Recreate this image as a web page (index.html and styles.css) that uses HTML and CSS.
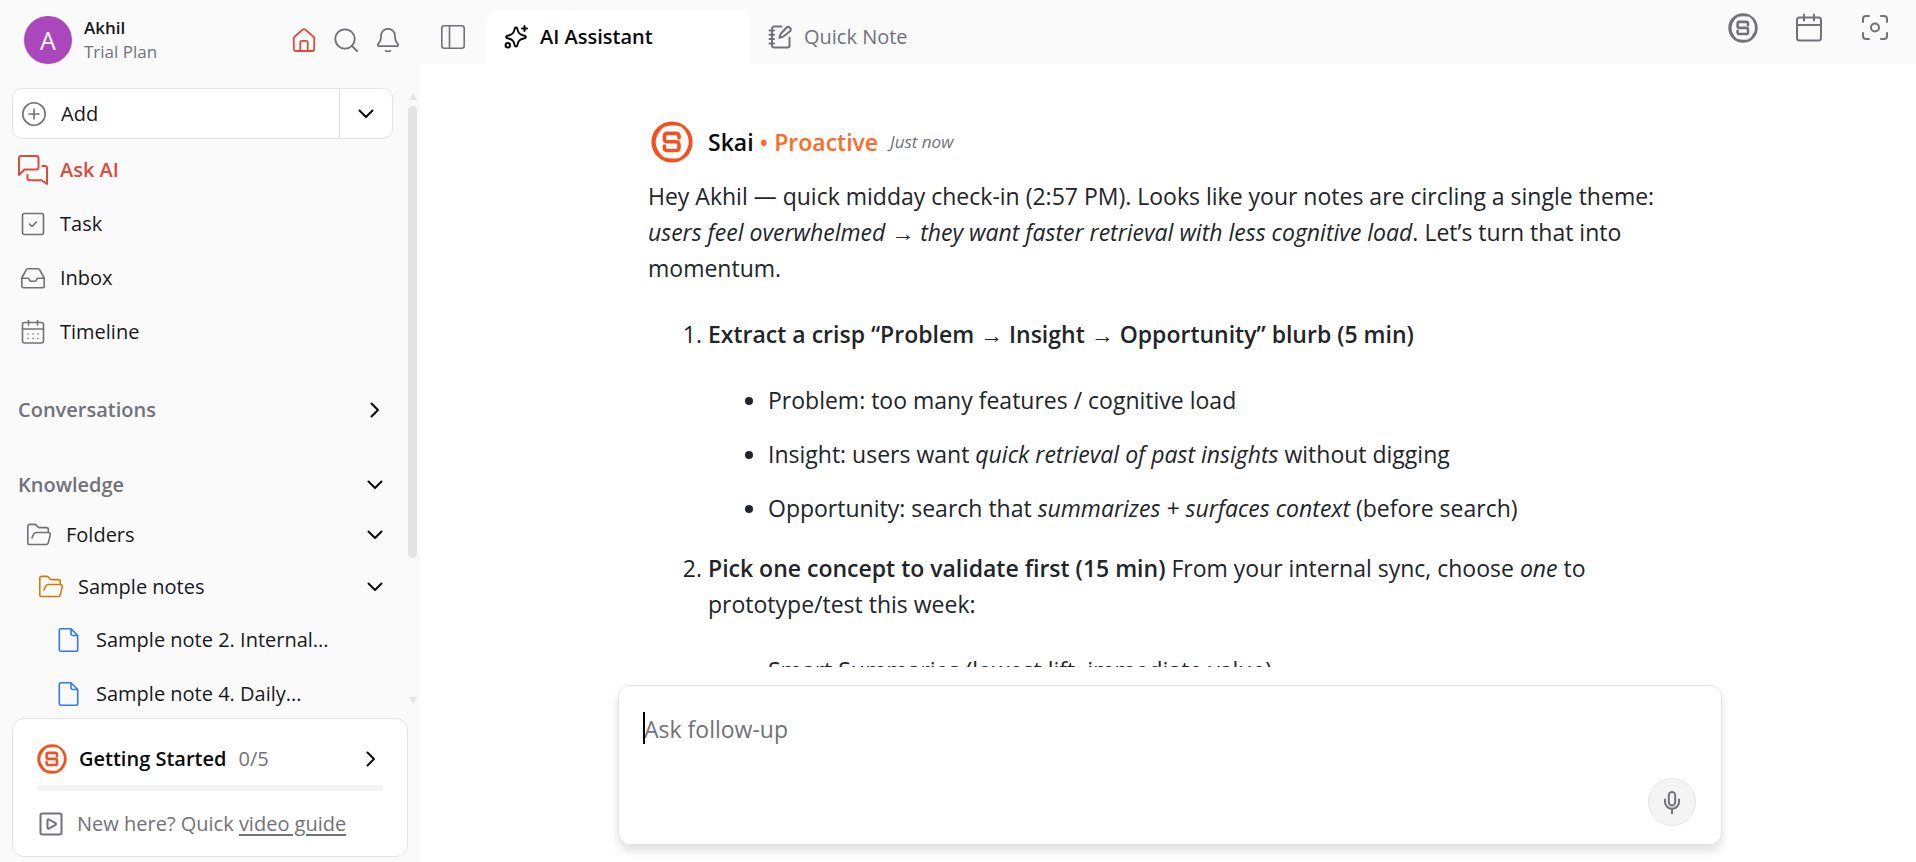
FILE: index.html
```html
<!DOCTYPE html>
<html lang="en">
<head>
<meta charset="utf-8">
<title>AI Assistant</title>
<link rel="stylesheet" href="styles.css">
</head>
<body>
<svg class="defs" aria-hidden="true">
  <symbol id="logo" viewBox="0 0 42 42"><path fill="currentColor" fill-rule="evenodd" d="M21 0.4a20.6 20.6 0 1 0 0 41.2a20.6 20.6 0 1 0 0-41.2zM14 5.400Q22 3.400 30 5.400Q34.500 9 36.800 15Q39 22 36 28Q33 34.500 28 37Q20 38.500 12.500 36Q8.500 33 5.500 26Q3.500 20 6.500 14Q10 7.500 14 5.400z"/><path fill="none" stroke="currentColor" stroke-width="3.6" d="M28 17v-2.100a2.500 2.500 0 0 0-2.500-2.500h-9.600a2.500 2.500 0 0 0-2.500 2.500v3.400a2.500 2.500 0 0 0 2.500 2.500h9.600a2.500 2.500 0 0 1 2.500 2.500v3.700a2.500 2.500 0 0 1-2.500 2.500h-9.600a2.500 2.500 0 0 1-2.500-2.500v-2"/></symbol>
  <symbol id="down" viewBox="0 0 24 24"><path d="M5.500 8.500l6.500 6.500 6.500-6.500"/></symbol>
  <symbol id="right" viewBox="0 0 24 24"><path d="M8.500 5.500l6.500 6.500-6.500 6.500"/></symbol>
  <symbol id="folder" viewBox="0 0 24 24"><path d="M.8 20V3.200a1.800 1.800 0 0 1 1.800-1.800h5.200a2 2 0 0 1 1.600.8l1.300 1.600a2 2 0 0 0 1.600.8h7a2 2 0 0 1 2 2V9.500M.8 20a1.500 1.500 0 0 0 1.500 1.500h17a2 2 0 0 0 1.900-1.400l2-8a2 2 0 0 0-1.900-2.600H9.500A3.500 3.500 0 0 0 6.300 11.700L5 15"/></symbol>
  <symbol id="file" viewBox="0 0 24 24"><path d="M4 .8h10l6.700 6.700v14a1.700 1.700 0 0 1-1.700 1.700H4a1.700 1.700 0 0 1-1.700-1.700v-19A1.700 1.700 0 0 1 4 .8zM14 .8v5a1.700 1.700 0 0 0 1.700 1.700h5"/></symbol>
</svg>
<div class="app">
  <aside class="sidebar">
    <header class="user">
      <span class="avatar">A</span>
      <div class="who"><strong>Akhil</strong><span>Trial Plan</span></div>
      <div class="quick">
        <button class="plain active" aria-label="Home"><svg class="i24 firm" viewBox="0 0 24 24"><path d="M1.800 10.300a2 2 0 0 1 .7-1.500l8-7a2.200 2.200 0 0 1 3 0l8 7a2 2 0 0 1 .7 1.500V21a2 2 0 0 1-2 2H3.800a2 2 0 0 1-2-2zM8.300 23v-8.700a1.500 1.500 0 0 1 1.500-1.500h4.400a1.500 1.500 0 0 1 1.500 1.500V23"/></svg></button>
        <button class="plain" aria-label="Search"><svg class="i24 firm" viewBox="0 0 24 24"><circle cx="11" cy="11" r="9.700"/><path d="M18 18l5 5"/></svg></button>
        <button class="plain" aria-label="Notifications"><svg class="i24 firm" viewBox="0 0 24 24"><path d="M9.700 22.800a4 4 0 0 0 4.600 0M2.200 15.800A1.400 1.400 0 0 0 3.200 18.200h17.600a1.400 1.400 0 0 0 1-2.400C20 14.200 19 12.500 19 7.800a7 7 0 0 0-14 0C5 12.500 4 14.200 2.200 15.800z"/></svg></button>
      </div>
    </header>
    <div class="scroller">
      <nav class="nav">
        <div class="add">
          <button class="add-main"><span class="slot"><svg class="i24" viewBox="0 0 24 24"><circle cx="12" cy="12" r="11.200"/><path d="M12 7v10M7 12h10"/></svg></span>Add</button>
          <button class="add-more" aria-label="More options"><svg class="i24 chev"><use href="#down"/></svg></button>
        </div>
        <a class="row active" href="#"><span class="slot"><svg class="i30" viewBox="0 0 30 30"><path d="M3 1h15.500a2 2 0 0 1 2 2v9.500a2 2 0 0 1-2 2H6.500L1 20V3a2 2 0 0 1 2-2zM24.500 11H27a2 2 0 0 1 2 2v16l-5.500-3.800h-12a2 2 0 0 1-2-2V20"/></svg></span>Ask AI</a>
        <a class="row" href="#"><span class="slot"><svg class="i24" viewBox="0 0 24 24"><rect x="1.500" y="1.500" width="21" height="21" rx="2"/><path d="M8.500 12l2.500 2.500 4.500-4.500"/></svg></span>Task</a>
        <a class="row" href="#"><span class="slot"><svg class="i24" viewBox="0 0 24 24"><path d="M.8 12.200h6a1.500 1.500 0 0 1 1.300.8l.8 1.500a1.500 1.500 0 0 0 1.300.8h3.600a1.500 1.500 0 0 0 1.300-.8l.8-1.500a1.500 1.500 0 0 1 1.300-.8h6M.8 12v8a1.700 1.700 0 0 0 1.700 1.700h19a1.700 1.700 0 0 0 1.700-1.700v-8L18.800 4a2.200 2.200 0 0 0-1.900-1.200H7.100A2.200 2.200 0 0 0 5.200 4z"/></svg></span>Inbox</a>
        <a class="row" href="#"><span class="slot"><svg class="i24" viewBox="0 0 24 24"><rect x="1.500" y="2.500" width="21" height="20.500" rx="2"/><path d="M1.500 9h21M7.500 0v5M16.500 0v5M7 14h.1M12 14h.1M17 14h.1M7 18.500h.1M12 18.500h.1M17 18.500h.1"/></svg></span>Timeline</a>
        <button class="row section">Conversations<svg class="i24 chev"><use href="#right"/></svg></button>
        <button class="row section">Knowledge<svg class="i24 chev"><use href="#down"/></svg></button>
        <button class="row folder root"><span class="slot"><svg class="i24"><use href="#folder"/></svg></span>Folders<svg class="i24 chev"><use href="#down"/></svg></button>
        <button class="row folder sub"><span class="slot amber"><svg class="i24"><use href="#folder"/></svg></span>Sample notes<svg class="i24 chev"><use href="#down"/></svg></button>
        <a class="row note" href="#"><span class="slot blue"><svg class="i24"><use href="#file"/></svg></span>Sample note 2. Internal...</a>
        <a class="row note" href="#"><span class="slot blue"><svg class="i24"><use href="#file"/></svg></span>Sample note 4. Daily...</a>
      </nav>
      <div class="bar" aria-hidden="true"><i class="up"></i><i class="thumb"></i><i class="down"></i></div>
    </div>
    <section class="start">
      <button class="start-head"><svg class="i30 brand"><use href="#logo"/></svg><strong>Getting Started</strong><span>0/5</span><svg class="i24 chev"><use href="#right"/></svg></button>
      <div class="track" role="progressbar" aria-label="Getting started" aria-valuenow="0" aria-valuemax="5"></div>
      <p class="guide"><svg class="i24 thick" viewBox="0 0 24 24"><rect x="1.500" y="1.500" width="21" height="21" rx="2"/><path d="M8.500 8.300a1 1 0 0 1 1.500-.8l6.500 3.700a1 1 0 0 1 0 1.700L10 16.600a1 1 0 0 1-1.500-.8z"/></svg><span>New here? Quick <a href="#">video guide</a></span></p>
    </section>
  </aside>
  <main class="main">
    <header class="top">
      <button class="plain panel" aria-label="Toggle sidebar"><svg class="i24" viewBox="0 0 24 24"><rect x=".8" y=".8" width="22.400" height="22.400" rx="2.500"/><path d="M8.500 1v22"/></svg></button>
      <div class="tabs" role="tablist">
        <button class="tab current" role="tab" aria-selected="true"><svg class="i24 thick" viewBox="0 0 24 24"><path d="M12 2.500c.9 0 1.200.8 1.400 1.600.8 4 2 5.600 6.200 6.400 1.200.2 2.200.5 2.200 1.500s-1 1.300-2.200 1.500c-4.200.8-5.400 2.400-6.200 6.400-.2.800-.5 1.600-1.400 1.600s-1.200-.8-1.400-1.600c-.8-4-2-5.600-6.200-6.400-1.200-.2-2.200-.5-2.200-1.500s1-1.300 2.200-1.500c4.200-.8 5.400-2.400 6.200-6.400.2-.8.500-1.600 1.400-1.600zM20.500 1v5M18 3.500h5"/><circle cx="3.800" cy="20.200" r="2.200"/></svg>AI Assistant</button>
        <button class="tab" role="tab" aria-selected="false"><svg class="i24 thick" viewBox="0 0 24 24"><path d="M13.400 1.500H6a2 2 0 0 0-2 2v17a2 2 0 0 0 2 2h13.500a2 2 0 0 0 2-2V12.600M1.500 5.500h4.500M1.500 9.800h4.500M1.500 14.100h4.500M1.500 18.400h4.500M22 6.200a2.200 2.200 0 0 0-3.600-3.400l-5.600 5.900a2 2 0 0 0-.5.900l-.9 3.200 3.400-1a2 2 0 0 0 .9-.6z"/></svg>Quick Note</button>
      </div>
      <div class="tools">
        <button class="plain" aria-label="Skai"><svg class="i30"><use href="#logo"/></svg></button>
        <button class="plain" aria-label="Calendar"><svg class="i30" viewBox="0 0 30 30"><rect x="3" y="4.500" width="24" height="23" rx="2.500"/><path d="M3 12h24M10 1.500v6M20 1.500v6"/></svg></button>
        <button class="plain" aria-label="Focus"><svg class="i30" viewBox="0 0 30 30"><path d="M3 9V6a3 3 0 0 1 3-3h3M21 3h3a3 3 0 0 1 3 3v3M27 20v3a3 3 0 0 1-3 3h-3M9 26H6a3 3 0 0 1-3-3v-3"/><circle cx="15" cy="14.500" r="4"/></svg></button>
      </div>
    </header>
    <div class="chat">
      <article class="message">
        <header class="by"><svg class="i42 brand"><use href="#logo"/></svg><strong>Skai <span>• Proactive</span></strong><time>Just now</time></header>
        <p>Hey Akhil — quick midday check-in (2:57 PM). Looks like your notes are circling a single theme: <em>users feel overwhelmed → they want faster retrieval with less cognitive load</em>. Let’s turn that into momentum.</p>
        <ol>
          <li><b>Extract a crisp “Problem → Insight → Opportunity” blurb (5 min)</b>
            <ul>
              <li>Problem: too many features / cognitive load</li>
              <li>Insight: users want <em>quick retrieval of past insights</em> without digging</li>
              <li>Opportunity: search that <em>summarizes + surfaces context</em> (before search)</li>
            </ul>
          </li>
          <li><b>Pick one concept to validate first (15 min)</b> From your internal sync, choose <em>one</em> to prototype/test this week:
            <ul>
              <li>Smart Summaries (lowest lift, immediate value)</li>
            </ul>
          </li>
        </ol>
      </article>
    </div>
    <form class="composer">
      <span class="caret" aria-hidden="true"></span>
      <textarea aria-label="Ask follow-up" placeholder="Ask follow-up"></textarea>
      <button class="mic" type="button" aria-label="Voice input"><svg class="i24 thick" viewBox="0 0 24 24"><rect x="8.800" y="2" width="6.400" height="13.500" rx="3.200"/><path d="M5 9.500v2.300a7 7 0 0 0 14 0V9.500M12 19v4.500"/></svg></button>
    </form>
  </main>
</div>
</body>
</html>
```
FILE: styles.css
```css
* { box-sizing: border-box; }
body {
  margin: 0;
  background: #fff;
  color: #18181b;
  font: 20px/30px "Open Sans", "Noto Sans", sans-serif;
}
button { margin: 0; padding: 0; border: 0; background: none; color: inherit; font: inherit; text-align: left; cursor: pointer; }
a { color: inherit; }
svg { display: block; flex: none; fill: none; stroke: currentColor; stroke-width: 1.600; stroke-linejoin: round; stroke-linecap: round; }
symbol[id="logo"] path:first-child { stroke: none; }
.defs { display: none; }
.i24 { width: 24px; height: 24px; }
.i30 { width: 30px; height: 30px; stroke-width: 2; }
.i42 { width: 42px; height: 42px; }
.firm { stroke-width: 1.800; }
.thick { stroke-width: 2; }
.chev { margin-left: auto; color: #09090b; stroke-width: 2; }
.brand { color: #f4511e; }
.plain { color: #71717a; }

.app { display: flex; height: 100vh; overflow: hidden; }

.sidebar { display: flex; flex-direction: column; width: 420px; flex: none; background: #fafafa; }
.user { display: flex; align-items: center; gap: 12px; padding: 16px 20px 24px 24px; }
.avatar { width: 48px; height: 48px; border-radius: 50%; background: #ab47bc; color: #fff; font-size: 25px; line-height: 48px; text-align: center; }
.who { display: flex; flex-direction: column; font-size: 17px; line-height: 24px; }
.who strong { font-weight: 600; }
.who span { color: #71717a; }
.quick { display: flex; gap: 18px; margin-left: auto; }
.plain.active, .active { color: #db4c3f; }

.scroller { display: flex; flex: 1; min-height: 0; overflow: hidden; }
.nav { flex: 1; min-width: 0; overflow: hidden; padding: 0 15px 0 12px; }
.add { display: flex; height: 51px; margin-bottom: 4px; border: 1px solid #e4e4e7; border-radius: 10px; background: #fff; }
.add-main { display: flex; flex: 1; align-items: center; gap: 12px; padding-left: 6px; }
.add-main .slot { color: #71717a; }
.add-more { display: flex; align-items: center; width: 53px; padding: 0 14px; border-left: 1px solid #e4e4e7; }
.slot { display: flex; justify-content: center; width: 30px; flex: none; color: #71717a; }
.active .slot { color: inherit; }
.slot.amber { color: #d97706; }
.slot.blue { color: #2f78f0; }
.row { display: flex; align-items: center; gap: 12px; width: 100%; height: 54px; padding: 0 6px; text-decoration: none; white-space: nowrap; }
.row.active { font-weight: 600; }
.row.section { height: 48px; margin-top: 27px; color: #71717a; font-weight: 600; }
.row.folder { height: 52px; }
.row.root { padding-left: 12px; }
.row.sub { padding-left: 24px; }
.row.note { padding-left: 42px; }

.bar { display: flex; flex-direction: column; align-items: center; width: 12px; padding: 5px 3px 2px 0; }
.bar .up, .bar .down { border: 4px solid transparent; border-top-width: 0; border-bottom: 7px solid #e4e4e4; }
.bar .thumb { width: 9px; height: 74%; margin: 6px 0 auto; border-radius: 5px; background: #e4e4e4; }
.bar .down { border-top: 7px solid #e4e4e4; border-bottom-width: 0; }

.start { margin: 12px 12px 5px; padding: 16px 24px 14px; border: 1px solid #e4e4e7; border-radius: 12px; background: #fff; }
.start-head { display: flex; align-items: center; gap: 12px; width: 100%; height: 48px; color: #09090b; }
.start-head strong { font-weight: 600; }
.start-head span { color: #71717a; font-weight: 500; }
.track { height: 6px; margin: 2px 0 15px; border-radius: 3px; background: #f4f4f5; }
.guide { display: flex; align-items: center; gap: 14px; height: 36px; margin: 0 0 0 2px; color: #71717a; }
.guide a { text-underline-offset: 3px; }

.main { display: flex; flex: 1; flex-direction: column; align-items: center; min-width: 0; }
.top { display: flex; align-self: stretch; height: 64px; padding: 10px 26px 0 21px; background: #fafafa; }
.panel { width: 45px; }
.tabs { display: flex; }
.tab { display: flex; align-items: center; gap: 12px; width: 264px; padding: 0 18px; border-radius: 12px 12px 0 0; color: #71717a; }
.tab.current { background: #fff; color: #09090b; font-weight: 600; }
.tools { display: flex; align-items: center; gap: 36px; margin-left: auto; padding-bottom: 18px; }

.chat { flex: 1; align-self: stretch; min-height: 0; overflow: hidden; padding: 57px 0 0 4px; }
.message { max-width: 1044px; margin: 0 auto; color: #212529; font-size: 23px; line-height: 36px; }
.by { display: flex; align-items: center; gap: 12px; margin-left: 3px; color: #09090b; }
.by strong { margin-left: 3px; font-weight: 600; }
.by strong span { color: #ff6b26; }
.by time { color: #71717a; font-size: 17px; font-style: italic; }
.message p { margin: 15px 0 30px; }
.message ol, .message ul { margin: 0; padding-left: 60px; }
.message ul { margin: 30px 0 24px; list-style: disc; }
.message ul li + li { margin-top: 18px; }
.message b { font-weight: 600; }

.composer { position: relative; display: flex; align-items: flex-end; width: 1104px; max-width: 94%; height: 160px; margin: 18px 0 17px 4px; padding: 24px 25px 18px; border: 1px solid #e4e4e7; border-radius: 12px; background: #fff; box-shadow: 0 6px 10px rgba(0, 0, 0, .12); }
.composer textarea { flex: 1; align-self: stretch; padding: 0; border: 0; outline: 0; resize: none; background: transparent; color: #18181b; font: 23px/38px "Open Sans", "Noto Sans", sans-serif; }
.composer textarea::placeholder { color: #71717a; opacity: 1; }
.caret { position: absolute; left: 24px; top: 26px; width: 2px; height: 32px; background: #000; }
.mic { display: flex; align-items: center; justify-content: center; width: 48px; height: 48px; border: 1px solid #e4e4e7; border-radius: 50%; background: #f4f4f5; color: #71717a; }
```
